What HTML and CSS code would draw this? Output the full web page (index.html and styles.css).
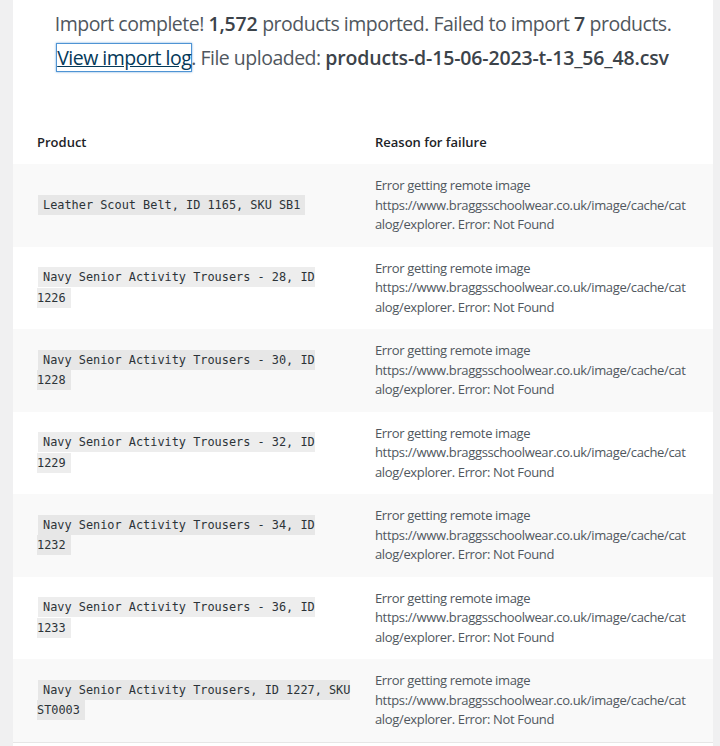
FILE: index.html
```html
<!DOCTYPE html>
<html>
<head>
<meta charset="utf-8">
<link rel="stylesheet" href="styles.css">
</head>
<body>
<div class="wrap">
  <div class="panel">
    <section class="done">
      <div class="line">Import complete! <strong>1,572</strong> products imported. Failed to import <strong>7</strong> products.</div>
      <div class="line"><a href="#" class="log-link">View import log</a>. File uploaded: <strong>products-d-15-06-2023-t-13_56_48.csv</strong></div>
    </section>
    <table class="log">
      <colgroup><col class="c1"><col class="c2"></colgroup>
      <thead>
        <tr><th class="p">Product</th><th class="r">Reason for failure</th></tr>
      </thead>
      <tbody>
        <tr><td class="p"><code>Leather Scout Belt, ID 1165, SKU SB1</code></td><td class="r">Error getting remote image https://www.braggsschoolwear.co.uk/image/cache/catalog/explorer. Error: Not Found</td></tr>
        <tr><td class="p"><code>Navy Senior Activity Trousers - 28, ID 1226</code></td><td class="r">Error getting remote image https://www.braggsschoolwear.co.uk/image/cache/catalog/explorer. Error: Not Found</td></tr>
        <tr><td class="p"><code>Navy Senior Activity Trousers - 30, ID 1228</code></td><td class="r">Error getting remote image https://www.braggsschoolwear.co.uk/image/cache/catalog/explorer. Error: Not Found</td></tr>
        <tr><td class="p"><code>Navy Senior Activity Trousers - 32, ID 1229</code></td><td class="r">Error getting remote image https://www.braggsschoolwear.co.uk/image/cache/catalog/explorer. Error: Not Found</td></tr>
        <tr><td class="p"><code>Navy Senior Activity Trousers - 34, ID 1232</code></td><td class="r">Error getting remote image https://www.braggsschoolwear.co.uk/image/cache/catalog/explorer. Error: Not Found</td></tr>
        <tr><td class="p"><code>Navy Senior Activity Trousers - 36, ID 1233</code></td><td class="r">Error getting remote image https://www.braggsschoolwear.co.uk/image/cache/catalog/explorer. Error: Not Found</td></tr>
        <tr><td class="p"><code>Navy Senior Activity Trousers, ID 1227, SKU ST0003</code></td><td class="r">Error getting remote image https://www.braggsschoolwear.co.uk/image/cache/catalog/explorer. Error: Not Found</td></tr>
      </tbody>
    </table>
  </div>
</div>
</body>
</html>
```

FILE: styles.css
```css
html, body {
  margin: 0;
  padding: 0;
}
body {
  background: #f0f0f1;
  font-family: "Open Sans", "Noto Sans", sans-serif;
  color: #3c434a;
  font-size: 13px;
  line-height: 1.5;
  overflow: hidden;
}
.wrap {
  padding: 0 7px 0 13px;
}
.panel {
  background: #fff;
  min-height: 746px;
}
.done {
  text-align: center;
  padding: 7px 24px 45.5px;
  font-size: 19.5px;
  line-height: 34.1px;
  color: #50575e;
  letter-spacing: -0.5px;
}
.done strong {
  font-weight: 600;
  color: #3c434a;
  letter-spacing: -0.15px;
}
.log-link {
  color: #043959;
  text-decoration: underline;
  box-shadow: 0 0 0 1px #4f94d4, 0 0 2px 1px rgba(79, 148, 212, 0.8);
  outline: none;
}
.log {
  width: 100%;
  border-collapse: collapse;
  table-layout: fixed;
}
.c1 { width: 340px; }
.log th {
  text-align: left;
  font-weight: 600;
  color: #1d2327;
  line-height: 19.5px;
  padding: 12px 24px;
}
.log td {
  line-height: 19.5px;
  padding: 12px 24px;
  vertical-align: middle;
}
.log .p { padding-right: 0; }
.log .r { padding-left: 22px; }
.log td.r {
  overflow-wrap: anywhere;
  color: #50575e;
  letter-spacing: -0.35px;
}
.log tbody tr:nth-child(odd) { background: #f9f9f9; }
.log tbody tr:last-child { border-bottom: 1px solid #e6e6e6; }
code {
  font-family: "DejaVu Sans Mono", monospace;
  font-size: 11.88px;
  background: rgba(0, 0, 0, 0.07);
  padding: 3px 5px 3px;
  margin: 0 1px;
  color: #2c3338;
}
```
